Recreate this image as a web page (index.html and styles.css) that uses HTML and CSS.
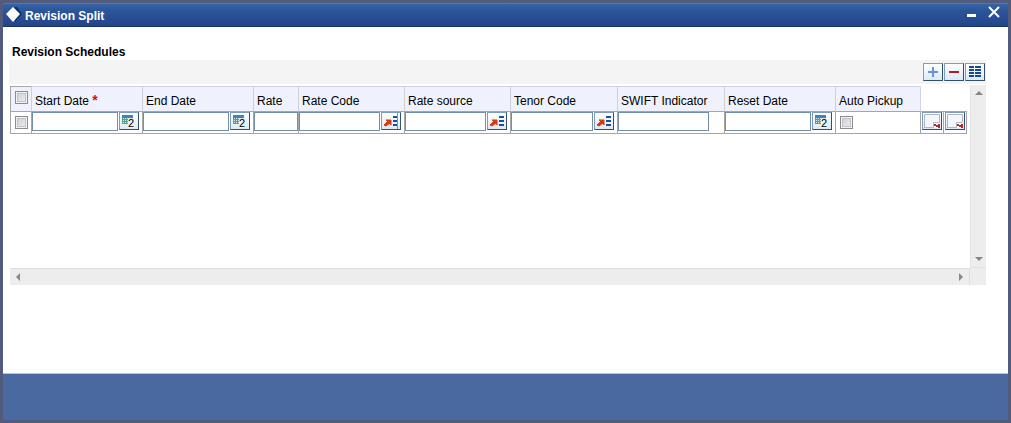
FILE: index.html
```html
<!DOCTYPE html>
<html lang="en">
<head>
    <meta charset="UTF-8">
    <meta name="viewport" content="width=device-width, initial-scale=1.0">
    <title>Revision Split</title>
    <link rel="stylesheet" href="styles.css">
</head>
<body>
    <!-- Shared icons -->
    <svg class="sprite" aria-hidden="true">
        <symbol id="icon-calendar" viewBox="0 0 18 16">
            <rect x="2" y="2" width="11" height="9" fill="#d9e8df"/>
            <rect x="2" y="2" width="11" height="3" fill="#3f82c4"/>
            <path d="M2 6.500h9M2 8.500h6M2 10.500h6M2.500 5v6M4.500 5v6M6.500 5v6" stroke="#5b9c8c" fill="none"/>
            <path d="M8 6h7v9H8z" fill="#eaf2fb"/>
            <text x="8" y="14" font-size="11" fill="#000">2</text>
        </symbol>
        <symbol id="icon-list" viewBox="0 0 18 16">
            <path d="M2 12l4-4-2-1h5v5L8 10l-4 3z" fill="#d63a12" stroke="#d63a12"/>
            <path d="M11 4h5M11 8h5M11 12h5" stroke="#1d4f94" stroke-width="2"/>
        </symbol>
        <symbol id="icon-detail" viewBox="0 0 18 16">
            <path d="M1 1h16v13H1z" fill="#f4f6fb"/>
            <path d="M1.500 15V1.500h15V9M2 14.500h8M10.500 15V9.500h6" stroke="#b0b6c2" fill="none"/>
            <path d="M11 10h6v5h-6z" fill="#fff"/>
            <path d="M11 11h2v2h-2zM13 12h2v2h-2zM15 11h2v4h-2z" fill="#b82a2a"/>
        </symbol>
    </svg>

    <div class="window">
        <header class="titlebar">
            <svg class="logo" viewBox="0 0 18 18" aria-hidden="true">
                <path d="M9 1h3l5 7-7 8z" fill="#0c3566"/>
                <path d="M8 1l7 7-7 8-7-8z" fill="#fff"/>
            </svg>
            <h1>Revision Split</h1>
            <button class="window-btn" aria-label="Minimize">
                <svg viewBox="0 0 12 12"><path d="M1 8h9v3H1z" fill="#fff"/></svg>
            </button>
            <button class="window-btn" aria-label="Close">
                <svg viewBox="0 0 12 12"><path d="M1 1l10 10M11 1L1 11" stroke="#fff" stroke-width="2"/></svg>
            </button>
        </header>

        <main>
            <h2>Revision Schedules</h2>
            <div class="toolbar">
                <button class="icon-btn" aria-label="Add row">
                    <svg viewBox="0 0 18 16"><path d="M9 3v10M4 8h10" stroke="#6793dc" stroke-width="2"/></svg>
                </button>
                <button class="icon-btn" aria-label="Delete row">
                    <svg viewBox="0 0 18 16"><path d="M4 8h10" stroke="#b01c22" stroke-width="2"/></svg>
                </button>
                <button class="icon-btn" aria-label="Single record view">
                    <svg viewBox="0 0 18 16"><path d="M3 3h5M9 3h6M3 6h5M9 6h6M3 9h5M9 9h6M3 12h5M9 12h6" stroke="#174a88" stroke-width="2"/></svg>
                </button>
            </div>

            <div class="grid">
                <div class="grid-view">
                    <table>
                        <colgroup>
                            <col class="col-check">
                            <col class="col-date">
                            <col class="col-date">
                            <col class="col-rate">
                            <col class="col-code">
                            <col class="col-code">
                            <col class="col-wide">
                            <col class="col-wide">
                            <col class="col-date">
                            <col class="col-auto">
                            <col class="col-action">
                            <col class="col-last">
                        </colgroup>
                        <thead>
                            <tr>
                                <th><input type="checkbox" aria-label="Select all rows"></th>
                                <th id="start">Start Date <span class="required">*</span></th>
                                <th id="end">End Date</th>
                                <th id="rate">Rate</th>
                                <th id="code">Rate Code</th>
                                <th id="source">Rate source</th>
                                <th id="tenor">Tenor Code</th>
                                <th id="swift">SWIFT Indicator</th>
                                <th id="reset">Reset Date</th>
                                <th id="auto">Auto Pickup</th>
                                <td class="blank" colspan="2"></td>
                            </tr>
                        </thead>
                        <tbody>
                            <tr>
                                <td><input type="checkbox" aria-label="Select row"></td>
                                <td>
                                    <div class="field">
                                        <input type="text" aria-labelledby="start">
                                        <button class="icon-btn" aria-label="Pick start date"><svg><use href="#icon-calendar"/></svg></button>
                                    </div>
                                </td>
                                <td>
                                    <div class="field">
                                        <input type="text" aria-labelledby="end">
                                        <button class="icon-btn" aria-label="Pick end date"><svg><use href="#icon-calendar"/></svg></button>
                                    </div>
                                </td>
                                <td>
                                    <div class="field field-full">
                                        <input type="text" aria-labelledby="rate">
                                    </div>
                                </td>
                                <td>
                                    <div class="field">
                                        <input type="text" aria-labelledby="code">
                                        <button class="icon-btn" aria-label="Look up rate code">
                                            <svg viewBox="0 0 18 16"><use href="#icon-list"/><path d="M15.500 0v16" stroke="#8a9099"/></svg>
                                        </button>
                                    </div>
                                </td>
                                <td>
                                    <div class="field">
                                        <input type="text" aria-labelledby="source">
                                        <button class="icon-btn" aria-label="Look up rate source"><svg><use href="#icon-list"/></svg></button>
                                    </div>
                                </td>
                                <td>
                                    <div class="field">
                                        <input type="text" aria-labelledby="tenor">
                                        <button class="icon-btn" aria-label="Look up tenor code"><svg><use href="#icon-list"/></svg></button>
                                    </div>
                                </td>
                                <td>
                                    <div class="field field-swift">
                                        <input type="text" aria-labelledby="swift">
                                    </div>
                                </td>
                                <td>
                                    <div class="field">
                                        <input type="text" aria-labelledby="reset">
                                        <button class="icon-btn" aria-label="Pick reset date"><svg><use href="#icon-calendar"/></svg></button>
                                    </div>
                                </td>
                                <td><input type="checkbox" aria-labelledby="auto"></td>
                                <td class="action"><button class="icon-btn" aria-label="Narrative"><svg><use href="#icon-detail"/></svg></button></td>
                                <td class="action"><button class="icon-btn" aria-label="Details"><svg><use href="#icon-detail"/></svg></button></td>
                            </tr>
                        </tbody>
                    </table>
                </div>
                <div class="scroll scroll-y">
                    <button aria-label="Scroll up"><svg viewBox="0 0 8 8"><path d="M4 2l4 4H0z" fill="#888"/></svg></button>
                    <button aria-label="Scroll down"><svg viewBox="0 0 8 8"><path d="M4 6L0 2h8z" fill="#888"/></svg></button>
                </div>
                <div class="scroll scroll-x">
                    <button aria-label="Scroll left"><svg viewBox="0 0 8 8"><path d="M2 4l4-4v8z" fill="#888"/></svg></button>
                    <button aria-label="Scroll right"><svg viewBox="0 0 8 8"><path d="M6 4L2 0v8z" fill="#888"/></svg></button>
                </div>
                <div class="corner"></div>
            </div>
        </main>

        <footer></footer>
    </div>
</body>
</html>
```
FILE: styles.css
```css
* {
    box-sizing: border-box;
}

body {
    margin: 0;
    font-family: "Liberation Sans", Arial, sans-serif;
    font-size: 12px;
    color: #000;
}

button {
    padding: 0;
    border: none;
    background: none;
    cursor: pointer;
}

svg {
    display: block;
}

.sprite {
    display: none;
}

.window {
    display: flex;
    flex-direction: column;
    min-height: 100vh;
    border: 3px solid #525b7c;
    background: #fff;
}

/* Title bar */
.titlebar {
    display: flex;
    align-items: center;
    gap: 10px;
    height: 24px;
    padding: 0 8px 0 2px;
    background: linear-gradient(#3565a8, #2c5599 30%, #22458a);
    border-top: 1px solid #5078b0;
    border-bottom: 1px solid #183468;
}

.titlebar h1 {
    flex: 1;
    margin: 2px 0 0 -8px;
    font-size: 12px;
    line-height: 16px;
    color: #fff;
}

.logo {
    width: 18px;
    height: 18px;
}

.window-btn svg {
    width: 12px;
    height: 12px;
}

.window-btn {
    padding-bottom: 6px;
}

/* Content */
main {
    flex: 1;
    padding: 18px 22px 24px 6px;
}

main h2 {
    margin: 0 0 0 3px;
    font-size: 12px;
    line-height: 15px;
}

.toolbar {
    display: flex;
    justify-content: flex-end;
    align-items: center;
    gap: 1px;
    height: 24px;
    margin-bottom: 1px;
    padding-right: 1px;
    background: #f4f4f4;
}

.icon-btn {
    flex: none;
    width: 20px;
    height: 18px;
    border: 1px solid #7e9db9;
    border-right-color: #34506f;
    border-bottom-color: #34506f;
    background: linear-gradient(#fff, #dce9f7);
}

.icon-btn svg {
    width: 18px;
    height: 16px;
}

/* Schedule grid */
.grid {
    display: grid;
    grid-template-columns: minmax(0, 1fr) 16px;
    grid-template-rows: 183px 17px;
    margin-left: 1px;
}

.grid-view {
    padding-top: 1px;
    overflow: hidden;
}

table {
    width: 957px;
    table-layout: fixed;
    border-collapse: separate;
    border-spacing: 0;
}

.col-check {
    width: 21px;
}

.col-date {
    width: 111px;
}

.col-rate {
    width: 45px;
}

.col-code {
    width: 106px;
}

.col-wide {
    width: 107px;
}

.col-auto {
    width: 85px;
}

.col-action {
    width: 23px;
}

.col-last {
    width: 24px;
}

th {
    height: 26px;
    padding: 3px 0 0 3px;
    border-top: 1px solid #cfd5e6;
    border-left: 1px solid #cfcfd6;
    border-bottom: 1px solid #a6a6a6;
    background: #eff2fc;
    font-weight: normal;
    text-align: left;
    white-space: nowrap;
}

th:first-child {
    padding: 0 0 3px 4px;
    border-color: #a6a6a6;
}

.required {
    color: #d01010;
    font-size: 14px;
    font-weight: bold;
    line-height: 12px;
}

td {
    height: 21px;
    padding: 0;
    border-left: 1px solid #a6a6a6;
    border-bottom: 1px solid #a6a6a6;
    vertical-align: top;
}

td:last-child {
    border-right: 1px solid #a6a6a6;
}

td.blank {
    border-right: none;
    border-left-color: #cfd5e6;
}

.action {
    padding-left: 1px;
}

.action .icon-btn {
    display: block;
}

.field {
    display: flex;
    gap: 1px;
    padding-right: 3px;
}

.field-full {
    padding-right: 0;
}

.field-swift {
    padding-right: 15px;
}

input[type="text"] {
    flex: 1;
    min-width: 0;
    height: 19px;
    padding: 0 2px;
    border: 1px solid #7390a8;
    background: #fff;
    font: inherit;
}

input[type="checkbox"] {
    appearance: none;
    display: block;
    width: 13px;
    height: 13px;
    margin: 0;
    border: 1px solid #8b8c8d;
    background: linear-gradient(135deg, #c6cad0, #f3f3f3);
    box-shadow: inset 0 0 0 1px #f2f2f2, inset 0 0 0 2px #c0c3c7;
}

td input[type="checkbox"] {
    margin: 4px;
}

/* Scroll bars */
.scroll {
    display: flex;
    justify-content: space-between;
    background: #ededed;
}

.scroll button {
    display: flex;
    align-items: center;
    justify-content: center;
    width: 16px;
    height: 16px;
}

.scroll svg {
    width: 8px;
    height: 8px;
}

.scroll-y {
    flex-direction: column;
    border-left: 1px solid #e4e4e4;
    border-bottom: 1px solid #e0e0e0;
}

.scroll-x {
    border-top: 1px solid #e0e0e0;
    border-right: 1px solid #e0e0e0;
}

.corner {
    background: #ededed;
}

/* Bottom bar */
footer {
    height: 47px;
    border-top: 1px solid #b4c5dc;
    background: #4a69a1;
}
```
